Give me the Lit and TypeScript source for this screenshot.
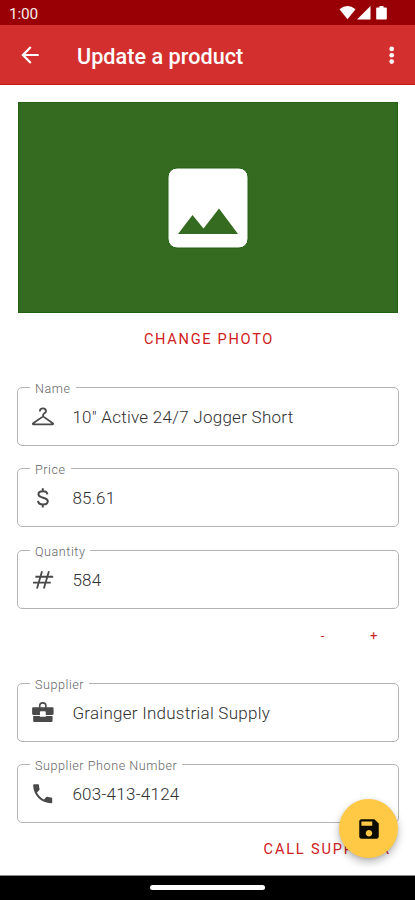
import { LitElement, html, css, svg, nothing } from "lit";
import { customElement, property } from "lit/decorators.js";

const icons = {
  hanger: svg`<path fill="none" stroke="currentColor" stroke-width="1.7" stroke-linejoin="round" d="M9.3 7.2C9.3 5.2 10.5 4.1 12.2 4.1s2.9 1.1 2.9 2.7c0 1.9-2.7 2-2.7 3.7v1.2L21.5 18.1c.7.6.4 1.2-.4 1.2H3.4c-.8 0-1.1-.6-.4-1.2l9.4-6.4"/>`,
  dollar: svg`<path fill="none" stroke="currentColor" stroke-width="1.9" d="M16.4 8.900C16.300 6.900 14.700 5.800 12.200 5.800c-2.500 0-4.200 1.100-4.200 3 0 4.300 8.800 2.200 8.800 6.600 0 1.900-1.800 3-4.500 3-2.800 0-4.500-1.200-4.700-3.400M12.100 3v3M12.100 18.100v3.100"/>`,
  hash: svg`<path fill="none" stroke="currentColor" stroke-width="1.7" d="M5.1 9.2H21.9M2.8 14.7H19.6M11.4 4L6.6 20.4M17.9 4L13.1 20.4"/>`,
  supplier: svg`<path fill-rule="evenodd" d="M3.3 6.9H21c.8 0 1.3.5 1.3 1.3v4.8c0 .7-.5 1.1-1.200 1.100h-6.200v-2.500c0-.6-.3-.9-.9-.9h-3.700c-.6 0-.9.3-.9.9v2.500H3.200c-.7 0-1.200-.4-1.200-1.100V8.200c0-.8.5-1.300 1.300-1.300zM3 15.200h6.400v.6h5.500v-.6h6.400v4.300c0 .9-.5 1.400-1.400 1.400H4.400c-.9 0-1.400-.5-1.400-1.400z"/><path fill="none" stroke="currentColor" stroke-width="1.500" d="M9.200 7.500V5.300C9.200 3.600 10.300 2.700 12.100 2.700s2.900.9 2.900 2.600v2.200"/>`,
  phone: svg`<path d="M6.62 10.79c1.44 2.83 3.76 5.14 6.59 6.59l2.2-2.2c.27-.27.67-.36 1.02-.24 1.12.37 2.33.57 3.57.57.55 0 1 .45 1 1V20c0 .55-.45 1-1 1-9.39 0-17-7.61-17-17 0-.55.45-1 1-1h3.5c.55 0 1 .45 1 1 0 1.25.2 2.45.57 3.57.11.35.03.74-.25 1.02l-2.2 2.2z"/>`,
};

@customElement("product-field")
export class ProductField extends LitElement {
  @property() label = "";
  @property() value = "";
  @property() icon: keyof typeof icons = "hanger";

  static styles = css`
    :host { display: block; height: 59px; }
    .outline {
      box-sizing: border-box; height: 59px; margin: 0; min-width: 0;
      border: 1.4px solid #b4b4b4; border-radius: 5px;
      padding: 0 0 0 12px; display: flex; align-items: center;
      position: relative; color: #303030;
    }
    .label {
      position: absolute; left: 12px; top: -7px; padding: 0 5px;
      background: #fff; color: #666; font-size: 12.6px; line-height: 15px; font-weight: 300;
      letter-spacing: 0.55px; white-space: nowrap;
    }
    svg { width: 25.4px; height: 25.4px; fill: currentColor; flex: none; color: #4a4a4a; }
    .value { margin-left: 17px; padding-top: 1px; font-size: 17px; font-weight: 300; letter-spacing: 0.26px; white-space: nowrap; }
  `;

  render() {
    return html`<div class="outline">
      <span class="label">${this.label}</span>
      <svg viewBox="0 0 24 24">${icons[this.icon] ?? nothing}</svg>
      <span class="value">${this.value}</span>
    </div>`;
  }
}

@customElement("app-root")
export class AppRoot extends LitElement {
  static styles = css`
    :host {
      display: flex; flex-direction: column; position: relative; box-sizing: border-box;
      width: 415px; height: 900px; overflow: hidden; background: #fff;
      font-family: Roboto, "Liberation Sans", sans-serif;
    }
    svg { display: block; flex: none; }
    .status {
      height: 25px; background: #990005; color: #fff; display: flex; align-items: center;
      justify-content: space-between; box-sizing: border-box; padding: 2px 27px 0 9px; font-size: 15.4px;
    }
    .time { letter-spacing: -0.2px; opacity: 0.92; }
    .bar {
      height: 60px; box-sizing: border-box; background: #d32f2f; color: #fff; display: flex;
      align-items: center; padding: 0 11px 0 17px; border-bottom: 1px solid #c41a1a;
    }
    .title { margin: 0 auto 0 34px; font-size: 21.6px; font-weight: 500; padding-top: 3px; letter-spacing: 0.04px; }
    .content { flex: 1; display: flex; flex-direction: column; padding: 17px 16px 0 17px; }
    .photo {
      height: 211px; margin: 0 1px; background: #346b20; box-sizing: border-box;
      border: 1px solid #236010; display: flex; align-items: center; justify-content: center;
    }
    .button { color: #cf2020; font-weight: 400; font-size: 14.6px; line-height: 18px; letter-spacing: 1.7px; }
    .change { text-align: center; margin: 17px -2px 39px 0; }
    .fields { display: grid; gap: 22.4px; }
    .steps { display: flex; justify-content: flex-end; gap: 44px; padding-right: 20px; height: 74px; box-sizing: border-box; padding-top: 18px; font-size: 13px; }
    .call { text-align: right; margin: 17px 8px 0 0; white-space: nowrap; letter-spacing: 1.8px; }
    .fab {
      position: absolute; left: 339px; top: 799px; width: 59px; height: 59px; border-radius: 50%;
      background: #ffc845; display: flex; align-items: center; justify-content: center;
      box-shadow: 0 4px 8px rgba(0, 0, 0, 0.28), 0 1px 3px rgba(0, 0, 0, 0.1);
    }
    .nav { height: 25px; background: #000; display: flex; justify-content: center; border-top: 1px solid #888; box-sizing: border-box; }
    .pill { width: 115px; height: 5px; border-radius: 3px; background: #fff; margin-top: 9px; }
  `;

  render() {
    return html`
      <div class="status">
        <span class="time">1:00</span>
        <svg width="49" height="16" viewBox="0 0 49 16" fill="#fff">
          <path d="M0.5 3.3Q8.5-3.2 16.5 3.3L8.5 13.2z" />
          <path d="M31.5 0V13.5H18z" />
          <path d="M38 1.5h2.5V0h4v1.500H47q.8 0 .8.8v10.400q0 .8-.8.8h-9q-.8 0-.8-.8V2.300q0-.8.8-.8z" />
        </svg>
      </div>
      <div class="bar">
        <svg width="26" height="26" viewBox="0 0 24 24" fill="#fff">
          <path d="M20 11H7.83l5.59-5.59L12 4l-8 8 8 8 1.41-1.41L7.83 13H20v-2z" />
        </svg>
        <span class="title">Update a product</span>
        <svg width="25.4" height="25.4" viewBox="0 0 24 24" fill="#fff">
          <circle cx="12" cy="6.5" r="2.2" /><circle cx="12" cy="12.5" r="2.2" /><circle cx="12" cy="18.5" r="2.2" />
        </svg>
      </div>
      <div class="content">
        <div class="photo">
          <svg width="82" height="82" viewBox="0 0 82 82">
            <rect x="1" y="1" width="80" height="80" rx="9" fill="#fff" stroke="#236010" />
            <path d="M11 67L25.5 48 36.5 61.5 52 41.5 71 67z" fill="#346b20" />
          </svg>
        </div>
        <div class="button change">CHANGE PHOTO</div>
        <div class="fields">
          <product-field label="Name" value='10" Active 24/7 Jogger Short' icon="hanger"></product-field>
          <product-field label="Price" value="85.61" icon="dollar"></product-field>
          <product-field label="Quantity" value="584" icon="hash"></product-field>
        </div>
        <div class="button steps"><span>-</span><span>+</span></div>
        <div class="fields">
          <product-field label="Supplier" value="Grainger Industrial Supply" icon="supplier"></product-field>
          <product-field label="Supplier Phone Number" value="603-413-4124" icon="phone"></product-field>
        </div>
        <div class="button call">CALL SUPPLIER</div>
      </div>
      <div class="nav"><div class="pill"></div></div>
      <div class="fab">
        <svg width="26" height="26" viewBox="0 0 24 24" fill="#0b0b00">
          <path fill-rule="evenodd" d="M17 3H5c-1.11 0-2 .9-2 2v14c0 1.1.89 2 2 2h14c1.1 0 2-.9 2-2V7l-4-4zm-5 16c-1.66 0-3-1.34-3-3s1.34-3 3-3 3 1.34 3 3-1.34 3-3 3zm3-10H5V5h10v4z" />
        </svg>
      </div>
    `;
  }
}
